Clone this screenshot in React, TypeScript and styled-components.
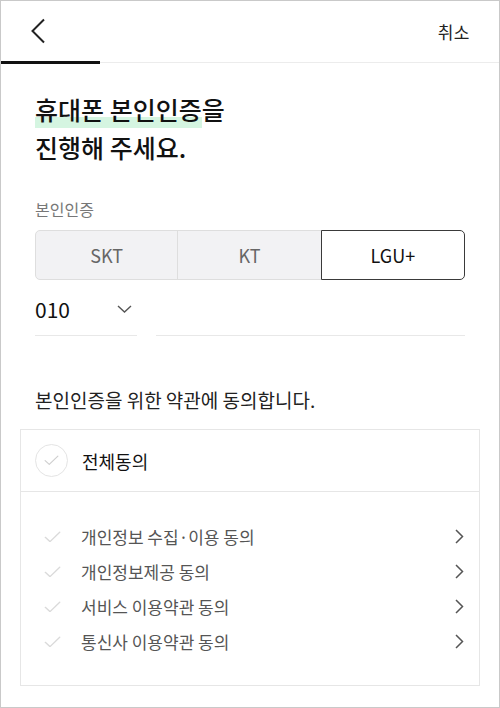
import React from "react";
import styled, { createGlobalStyle } from "styled-components";

const GlobalStyle = createGlobalStyle`
  * { box-sizing: border-box; }
  body {
    margin: 0;
    background: #ffffff;
    font-family: "Noto Sans CJK KR", "Noto Sans", sans-serif;
    color: #111111;
  }
`;

const Screen = styled.div`
  width: 500px;
  height: 708px;
  border: 1px solid #c9c9c9;
  background: #ffffff;
  overflow: hidden;
`;

const Header = styled.header`
  height: 60px;
  display: flex;
  align-items: center;
  justify-content: space-between;
  padding: 0 29px 0 29px;
`;

const BackButton = styled.button`
  border: none;
  background: none;
  padding: 0;
  display: flex;
  align-items: center;
  cursor: pointer;
`;

const CancelText = styled.span`
  font-size: 17px;
  color: #222222;
  letter-spacing: 0.5px;
`;

const Progress = styled.div`
  display: flex;
  align-items: center;
  height: 3px;
`;

const ProgressFill = styled.div`
  width: 99px;
  height: 3px;
  background: #111111;
`;

const ProgressTrack = styled.div`
  flex: 1;
  height: 1px;
  background: #ececec;
`;

const Content = styled.main`
  padding: 0 34px;
`;

const Title = styled.h1`
  margin: 26px 0 0;
  font-size: 25px;
  font-weight: 500;
  line-height: 38px;
  color: #111111;
`;

const Highlight = styled.span`
  position: relative;
  isolation: isolate;
  &::after {
    content: "";
    position: absolute;
    left: 0;
    right: 0;
    bottom: -1px;
    height: 11px;
    background: #d5f5e1;
    z-index: -1;
  }
`;

const FieldLabel = styled.div`
  margin-top: 32px;
  font-size: 16px;
  line-height: 22px;
  color: #777777;
`;

const Segmented = styled.div`
  margin-top: 10px;
  display: grid;
  grid-template-columns: repeat(3, 1fr);
  height: 50px;
`;

const Segment = styled.button<{ $active?: boolean }>`
  position: relative;
  font-family: inherit;
  font-size: 18px;
  border: 1px solid ${(p) => (p.$active ? "#3a3a3a" : "#dedede")};
  background: ${(p) => (p.$active ? "#ffffff" : "#f2f2f4")};
  color: ${(p) => (p.$active ? "#111111" : "#666666")};
  z-index: ${(p) => (p.$active ? 1 : 0)};
  padding: 0;
  &:not(:first-child) {
    margin-left: -1px;
  }
  &:first-child {
    border-radius: 5px 0 0 5px;
  }
  &:last-child {
    border-radius: 0 5px 5px 0;
  }
`;

const PhoneRow = styled.div`
  margin-top: 10px;
  display: flex;
  gap: 19px;
`;

const PrefixSelect = styled.div`
  width: 102px;
  height: 46px;
  display: flex;
  align-items: center;
  justify-content: space-between;
  padding: 0 5px 8px 0;
  border-bottom: 1px solid #e8e8e8;
  font-size: 21px;
  color: #111111;
`;

const NumberInput = styled.div`
  flex: 1;
  height: 46px;
  border-bottom: 1px solid #e8e8e8;
`;

const AgreeHeading = styled.p`
  margin: 51px 0 0;
  font-size: 19px;
  line-height: 26px;
  color: #222222;
`;

const TermsBox = styled.section`
  margin: 16px -15px 0;
  border: 1px solid #e6e6e6;
`;

const AllRow = styled.div`
  height: 62px;
  display: flex;
  align-items: center;
  gap: 14px;
  padding-left: 14px;
  border-bottom: 1px solid #e6e6e6;
  font-size: 18px;
  color: #111111;
`;

const CheckCircle = styled.span`
  width: 33px;
  height: 33px;
  border-radius: 50%;
  border: 1px solid #e4e4e4;
  display: flex;
  align-items: center;
  justify-content: center;
`;

const TermsList = styled.ul`
  list-style: none;
  margin: 0;
  padding: 27px 15px 26px 22px;
`;

const TermItem = styled.li`
  height: 35px;
  display: flex;
  align-items: center;
  font-size: 17px;
  color: #555555;
`;

const ItemCheck = styled.span`
  width: 18px;
  display: flex;
  justify-content: center;
  margin-right: 20px;
`;

const ItemLabel = styled.span`
  flex: 1;
`;

const Check = ({ size, color }: { size: number; color: string }) => (
  <svg width={size} height={size * 0.7} viewBox="0 0 20 14" fill="none">
    <path d="M1.5 7.5 L7 12.5 L18.5 1.5" stroke={color} strokeWidth="1.6" strokeLinecap="round" strokeLinejoin="round" />
  </svg>
);

const terms = ["개인정보 수집·이용 동의", "개인정보제공 동의", "서비스 이용약관 동의", "통신사 이용약관 동의"];

export default function App() {
  return (
    <>
      <GlobalStyle />
      <Screen>
        <Header>
          <BackButton aria-label="뒤로">
            <svg width="16" height="26" viewBox="0 0 16 26" fill="none">
              <path d="M14 1.5 L2.5 13 L14 24.5" stroke="#222" strokeWidth="2" strokeLinejoin="miter" />
            </svg>
          </BackButton>
          <CancelText>취소</CancelText>
        </Header>
        <Progress>
          <ProgressFill />
          <ProgressTrack />
        </Progress>

        <Content>
          <Title>
            <Highlight>휴대폰 본인인증</Highlight>을
            <br />
            진행해 주세요.
          </Title>

          <FieldLabel>본인인증</FieldLabel>
          <Segmented>
            <Segment>SKT</Segment>
            <Segment>KT</Segment>
            <Segment $active>LGU+</Segment>
          </Segmented>

          <PhoneRow>
            <PrefixSelect>
              <span>010</span>
              <svg width="15" height="8" viewBox="0 0 15 8" fill="none">
                <path d="M1 1 L7.5 7 L14 1" stroke="#555" strokeWidth="1.4" />
              </svg>
            </PrefixSelect>
            <NumberInput />
          </PhoneRow>

          <AgreeHeading>본인인증을 위한 약관에 동의합니다.</AgreeHeading>

          <TermsBox>
            <AllRow>
              <CheckCircle>
                <Check size={15} color="#cfcfcf" />
              </CheckCircle>
              전체동의
            </AllRow>
            <TermsList>
              {terms.map((t) => (
                <TermItem key={t}>
                  <ItemCheck>
                    <Check size={17} color="#dadada" />
                  </ItemCheck>
                  <ItemLabel>{t}</ItemLabel>
                  <svg width="9" height="15" viewBox="0 0 9 15" fill="none">
                    <path d="M1 1 L7.5 7.5 L1 14" stroke="#555" strokeWidth="1.5" />
                  </svg>
                </TermItem>
              ))}
            </TermsList>
          </TermsBox>
        </Content>
      </Screen>
    </>
  );
}
